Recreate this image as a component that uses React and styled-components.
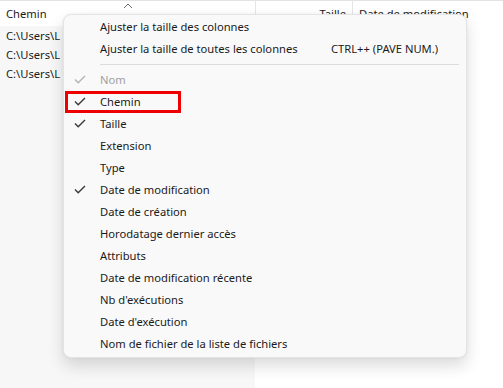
import React from 'react';
import styled, { createGlobalStyle } from 'styled-components';

const GlobalStyle = createGlobalStyle`
  html, body {
    margin: 0;
    padding: 0;
    background: #ffffff;
    overflow: hidden;
  }
  body {
    font-family: "Noto Sans", "Open Sans", "Liberation Sans", sans-serif;
    font-size: 11.2px;
    color: #1a1a1a;
  }
`;

const Window = styled.div`
  position: relative;
  width: 503px;
  height: 388px;
  border-top: 1px solid #e3e3e3;
  box-sizing: border-box;
  display: flex;
  flex-direction: column;
  background: #ffffff;
`;

const Columns = styled.div`
  display: grid;
  grid-template-columns: 255px 97px 1fr;
  flex: 1;
`;

const Column = styled.div`
  display: flex;
  flex-direction: column;
  background: ${(p) => (p.$sorted ? '#f7f7f7' : '#ffffff')};
`;

const HeaderCell = styled.div`
  position: relative;
  height: 25px;
  box-sizing: border-box;
  padding: 0 6px 1px;
  display: flex;
  align-items: center;
  justify-content: ${(p) => (p.$right ? 'flex-end' : 'flex-start')};
  background: #ffffff;
  border-left: ${(p) => (p.$first ? 'none' : '1px solid #e5e5e5')};
  color: #1a1a1a;
  white-space: nowrap;
  overflow: hidden;
`;

const SortArrow = styled.svg`
  position: absolute;
  top: 2px;
  left: 123px;
`;

const Cell = styled.div`
  height: 19px;
  box-sizing: border-box;
  padding: 0 6px 1px;
  display: flex;
  align-items: center;
  white-space: nowrap;
  overflow: hidden;
`;

const Menu = styled.div`
  position: absolute;
  left: 63px;
  top: 13px;
  width: 404px;
  box-sizing: border-box;
  padding: 1px 0 2px;
  background: #f9f9f9;
  border: 1px solid #e4e4e4;
  border-radius: 8px;
  box-shadow: 0 8px 16px rgba(0, 0, 0, 0.14), 0 0 3px rgba(0, 0, 0, 0.06);
  display: flex;
  flex-direction: column;
`;

const Item = styled.div`
  position: relative;
  height: 22px;
  box-sizing: border-box;
  padding: 0 8px 2px 36px;
  display: flex;
  align-items: center;
  color: ${(p) => (p.$disabled ? '#a0a0a0' : '#1a1a1a')};
  white-space: nowrap;

  &::after {
    content: '';
    display: ${(p) => (p.$highlighted ? 'block' : 'none')};
    position: absolute;
    left: 1px;
    top: 0;
    width: 116px;
    height: 22px;
    box-sizing: border-box;
    border: 3px solid #ee0000;
  }
`;

const Check = styled.svg`
  position: absolute;
  left: 10px;
  top: 6px;
`;

const Label = styled.span`
  flex: 0 0 auto;
  width: ${(p) => (p.$withShortcut ? '231px' : 'auto')};
`;

const Shortcut = styled.span`
  color: #1a1a1a;
`;

const Separator = styled.div`
  height: 9px;
  display: flex;
  align-items: center;
  padding: 0 7px 0 36px;

  &::before {
    content: '';
    flex: 1;
    height: 1px;
    background: #dcdcdc;
  }
`;

const items = [
  { label: 'Nom', checked: true, disabled: true },
  { label: 'Chemin', checked: true, highlighted: true },
  { label: 'Taille', checked: true },
  { label: 'Extension' },
  { label: 'Type' },
  { label: 'Date de modification', checked: true },
  { label: 'Date de création' },
  { label: 'Horodatage dernier accès' },
  { label: 'Attributs' },
  { label: 'Date de modification récente' },
  { label: "Nb d'exécutions" },
  { label: "Date d'exécution" },
  { label: 'Nom de fichier de la liste de fichiers' },
];

const CheckMark = ({ color }) => (
  <Check width="12" height="9" viewBox="0 0 12 9">
    <path d="M1 4.6 L4.2 7.8 L11 1" fill="none" stroke={color} strokeWidth="1.4" />
  </Check>
);

const App = () => {
  return (
    <>
      <GlobalStyle />
      <Window>
        <Columns>
          <Column $sorted>
            <HeaderCell $first>
              Chemin
              <SortArrow width="10" height="6" viewBox="0 0 10 6">
                <path d="M1 5 L5 1 L9 5" fill="none" stroke="#6b6b6b" strokeWidth="1" />
              </SortArrow>
            </HeaderCell>
            <Cell>C:\Users\L</Cell>
            <Cell>C:\Users\L</Cell>
            <Cell>C:\Users\L</Cell>
          </Column>
          <Column>
            <HeaderCell $right>Taille</HeaderCell>
          </Column>
          <Column>
            <HeaderCell>Date de modification</HeaderCell>
          </Column>
        </Columns>

        <Menu>
          <Item>Ajuster la taille des colonnes</Item>
          <Item>
            <Label $withShortcut>Ajuster la taille de toutes les colonnes</Label>
            <Shortcut>CTRL++ (PAVE NUM.)</Shortcut>
          </Item>
          <Separator />
          {items.map((it) => (
            <Item key={it.label} $disabled={it.disabled} $highlighted={it.highlighted}>
              {it.checked && <CheckMark color={it.disabled ? '#b4b4b4' : '#3a3a3a'} />}
              {it.label}
            </Item>
          ))}
        </Menu>
      </Window>
    </>
  );
};

export default App;
